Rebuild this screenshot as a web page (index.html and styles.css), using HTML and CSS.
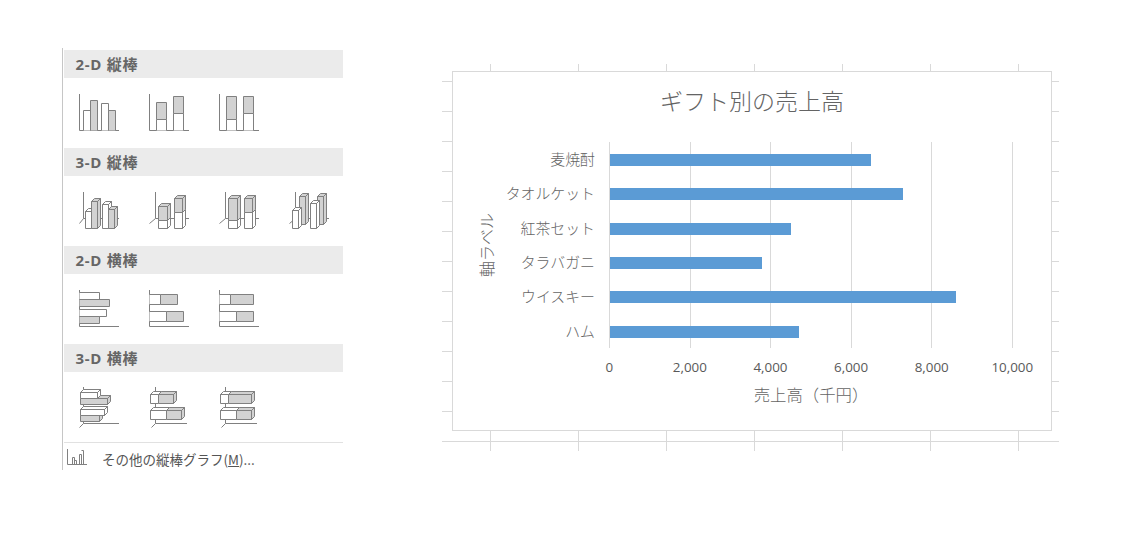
FILE: index.html
```html
<!DOCTYPE html>
<html lang="ja">
<head>
<meta charset="utf-8">
<title>縦棒グラフ</title>
<link rel="stylesheet" href="styles.css">
</head>
<body>
<div class="page">
  <aside class="panel">
    <section>
      <h2 class="head">2-D 縦棒</h2>
      <div class="icons">
        <svg class="ic" viewBox="0 0 40 45"><path d="M.5 1V37.5H40"/><path class="w" d="M4.5 37.5V17.5H11.5V37.5M22.5 37.5V10.5H29.5V37.5"/><path class="g" d="M11.5 37.5V7.5H18.5V37.5M29.5 37.5V17.5H36.5V37.5"/></svg>
        <svg class="ic" viewBox="0 0 40 45"><path d="M.5 1V37.5H40"/><path class="g" d="M7.5 9.5h10v17h-10zM24.5 3.5h10v17h-10z"/><path class="w" d="M7.5 37.5V26.5h10V37.5M24.5 37.5V20.5h10V37.5"/></svg>
        <svg class="ic" viewBox="0 0 40 45"><path d="M.5 1V37.5H40"/><path class="g" d="M7.5 3.5h10v23h-10zM24.5 3.5h10v17h-10z"/><path class="w" d="M7.5 37.5V26.5h10V37.5M24.5 37.5V20.5h10V37.5"/></svg>
      </div>
    </section>
    <section>
      <h2 class="head">3-D 縦棒</h2>
      <div class="icons">
        <svg class="ic" viewBox="0 0 40 45"><path d="M4.5 1V27.5M.5 32.5L4.5 27.5H40"/>
          <path class="w" d="M6.5 20.5h6v17h-6zM6.5 20.5l3-3h6l-3 3zM12.5 20.5l3-3v17l-3 3z"/>
          <path class="g" d="M12.5 10.5h6v27h-6zM12.5 10.5l3-3h6l-3 3zM18.5 10.5l3-3v27l-3 3z"/>
          <path class="w" d="M23.5 13.5h6v24h-6zM23.5 13.5l3-3h6l-3 3zM29.5 13.5l3-3v24l-3 3z"/>
          <path class="g" d="M29.5 18.5h6v19h-6zM29.5 18.5l3-3h6l-3 3zM35.5 18.5l3-3v19l-3 3z"/></svg>
        <svg class="ic" viewBox="0 0 40 45"><path d="M6.5 1V27.5M.5 32.5L6.5 27.5H40"/>
          <path class="w" d="M9.5 29.5h9v8h-9zM18.5 29.5l3-3v8l-3 3z"/>
          <path class="g" d="M9.5 15.5h9v14h-9zM9.5 15.5l3-3h9l-3 3zM18.5 15.5l3-3v14l-3 3z"/>
          <path class="w" d="M25.5 21.5h8v16h-8zM33.5 21.5l3-3v16l-3 3z"/>
          <path class="g" d="M25.5 7.5h8v14h-8zM25.5 7.5l3-3h8l-3 3zM33.5 7.5l3-3v14l-3 3z"/></svg>
        <svg class="ic" viewBox="0 0 40 45"><path d="M6.5 1V27.5M.5 32.5L6.5 27.5H40"/>
          <path class="w" d="M9.5 29.5h9v8h-9zM18.5 29.5l3-3v8l-3 3z"/>
          <path class="g" d="M9.5 7.5h9v22h-9zM9.5 7.5l3-3h9l-3 3zM18.5 7.5l3-3v22l-3 3z"/>
          <path class="w" d="M25.5 21.5h8v16h-8zM33.5 21.5l3-3v16l-3 3z"/>
          <path class="g" d="M25.5 7.5h8v14h-8zM25.5 7.5l3-3h8l-3 3zM33.5 7.5l3-3v14l-3 3z"/></svg>
        <svg class="ic" viewBox="0 0 40 45"><path d="M6.5 1V27.5M.5 32.5L6.5 27.5H40"/>
          <path class="g" d="M10.5 5.5h6v28h-6zM10.5 5.5l3-3h6l-3 3zM16.5 5.5l3-3v28l-3 3z"/>
          <path class="g" d="M28.5 5.5h6v28h-6zM28.5 5.5l3-3h6l-3 3zM34.5 5.5l3-3v28l-3 3z"/>
          <path class="w" d="M3.5 19.5h6v18h-6zM3.5 19.5l3-3h6l-3 3zM9.5 19.5l3-3v18l-3 3z"/>
          <path class="w" d="M21.5 12.5h6v25h-6zM21.5 12.5l3-3h6l-3 3zM27.5 12.5l3-3v25l-3 3z"/></svg>
      </div>
    </section>
    <section>
      <h2 class="head">2-D 横棒</h2>
      <div class="icons">
        <svg class="ic" viewBox="0 0 40 45"><path d="M.5 1V37.5H40"/><path class="w" d="M.5 3.5H20.5V10.5H.5M.5 20.5H27.5V27.5H.5"/><path class="g" d="M.5 10.5H30.5V17.5H.5M.5 27.5H20.5V34.5H.5"/></svg>
        <svg class="ic" viewBox="0 0 40 45"><path d="M.5 1V37.5H40"/><path class="w" d="M.5 5.5H11.5V15.5H.5M.5 22.5H17.5V32.5H.5"/><path class="g" d="M11.5 5.5H28.5V15.5H11.5zM17.5 22.5H34.5V32.5H17.5z"/></svg>
        <svg class="ic" viewBox="0 0 40 45"><path d="M.5 1V37.5H40"/><path class="w" d="M.5 5.5H11.5V15.5H.5M.5 22.5H17.5V32.5H.5"/><path class="g" d="M11.5 5.5H34.5V15.5H11.5zM17.5 22.5H34.5V32.5H17.5z"/></svg>
      </div>
    </section>
    <section>
      <h2 class="head">3-D 横棒</h2>
      <div class="icons">
        <svg class="ic" viewBox="0 0 40 45"><path d="M4.5 0V36.5M.5 40.5L4.5 36.5H40"/>
          <path class="g" d="M1.5 11.5h27v6h-27zM1.5 11.5l3-3h27l-3 3zM28.5 11.5l3-3v6l-3 3z"/>
          <path class="w" d="M1.5 5.5h17v6h-17zM1.5 5.5l3-3h17l-3 3zM18.5 5.5l3-3v6l-3 3z"/>
          <path class="g" d="M1.5 28.5h19v6h-19zM1.5 28.5l3-3h19l-3 3zM20.5 28.5l3-3v6l-3 3z"/>
          <path class="w" d="M1.5 22.5h24v6h-24zM1.5 22.5l3-3h24l-3 3zM25.5 22.5l3-3v6l-3 3z"/></svg>
        <svg class="ic" viewBox="0 0 40 45"><path d="M6.5 0V36.5M2.5 40.5L6.5 36.5H38"/>
          <path class="g" d="M9.5 7.5h15v9h-15zM9.5 7.5l3-3h15l-3 3zM24.5 7.5l3-3v9l-3 3z"/>
          <path class="w" d="M1.5 7.5h8v9h-8zM1.5 7.5l3-3h8l-3 3z"/>
          <path class="g" d="M17.5 23.5h15v9h-15zM17.5 23.5l3-3h15l-3 3zM32.5 23.5l3-3v9l-3 3z"/>
          <path class="w" d="M1.5 23.5h16v9h-16zM1.5 23.5l3-3h16l-3 3z"/></svg>
        <svg class="ic" viewBox="0 0 40 45"><path d="M6.5 0V36.5M2.5 40.5L6.5 36.5H38"/>
          <path class="g" d="M9.5 7.5h23v9h-23zM9.5 7.5l3-3h23l-3 3zM32.5 7.5l3-3v9l-3 3z"/>
          <path class="w" d="M1.5 7.5h8v9h-8zM1.5 7.5l3-3h8l-3 3z"/>
          <path class="g" d="M17.5 23.5h15v9h-15zM17.5 23.5l3-3h15l-3 3zM32.5 23.5l3-3v9l-3 3z"/>
          <path class="w" d="M1.5 23.5h16v9h-16zM1.5 23.5l3-3h16l-3 3z"/></svg>
      </div>
    </section>
    <div class="more">
      <svg class="more-ic" viewBox="0 0 20 17"><path d="M.5 0V15.5H20M5.5 15V8.5H7.5V15M7.5 11.5H9.5V15M12.5 15V5.5H14.5V15M14.5 1.5H16.5V15"/></svg>
      <span class="more-label">その他の縦棒グラフ(<u>M</u>)...</span>
    </div>
  </aside>

  <div class="sheet">
    <div class="chart">
      <div class="title">ギフト別の売上高</div>
      <div class="ytitle">軸ラベル</div>
      <div class="cats">
        <div>麦焼酎</div><div>タオルケット</div><div>紅茶セット</div><div>タラバガニ</div><div>ウイスキー</div><div>ハム</div>
      </div>
      <div class="plot">
        <div class="grid"><i></i><i></i><i></i><i></i><i></i></div>
        <div class="bars">
          <div class="row"><b style="width:261px"></b></div>
          <div class="row"><b style="width:293px"></b></div>
          <div class="row"><b style="width:181px"></b></div>
          <div class="row"><b style="width:152px"></b></div>
          <div class="row"><b style="width:346px"></b></div>
          <div class="row"><b style="width:189px"></b></div>
        </div>
      </div>
      <div class="ticks"><span>0</span><span>2,000</span><span>4,000</span><span>6,000</span><span>8,000</span><span>10,000</span></div>
      <div class="xtitle">売上高（千円）</div>
    </div>
  </div>
</div>
</body>
</html>
```
FILE: styles.css
```css
* { box-sizing: border-box; }
html, body { margin: 0; padding: 0; background: #fff; }
body { font-family: "Noto Sans CJK JP", "Open Sans", sans-serif; overflow: hidden; }

.page { display: flex; align-items: flex-start; padding: 48px 0 0 62px; height: 535px; }

.panel { width: 281px; height: 422px; border-left: 1px solid #c6c6c6; padding: 2px 0 0 1px; flex: none; }
.head {
  margin: 0; height: 28px; padding: 0 0 0 11.5px; background: #ebebeb;
  font: 700 15px/28px "Open Sans", "Noto Sans CJK JP", sans-serif; letter-spacing: .7px; color: #666;
}
.icons { display: flex; gap: 30px; height: 70px; padding: 15px 0 0 15px; }
.ic { display: block; width: 40px; height: 45px; flex: none; overflow: visible; }
.ic path, .more-ic path { fill: none; stroke: #808080; stroke-width: 1; }
.ic path.g { fill: #d2d2d2; }
.ic path.w { fill: #fff; }

.more {
  display: flex; align-items: flex-start; gap: 15px; height: 28px;
  border-top: 1px solid #e1e1e1; padding-left: 3px;
  font-size: 13.5px; color: #555;
}
.more-ic { display: block; width: 20px; height: 17px; flex: none; margin-top: 6px; }
.more-label { display: block; margin-top: 6px; line-height: 20px; white-space: nowrap; }

.sheet {
  position: relative; flex: none; margin: 16px 0 0 99px; width: 617px; height: 387px;
  background-image:
    repeating-linear-gradient(to right, #d9d9d9 0 1px, transparent 1px 88px),
    repeating-linear-gradient(to bottom, #d9d9d9 0 1px, transparent 1px 30px);
  background-position: 48px 0, 0 17px;
  background-size: 569px 387px, 617px 361px;
  background-repeat: no-repeat;
}
.chart {
  position: absolute; left: 10px; top: 7px; width: 600px; height: 360px;
  background: #fff; border: 1px solid #d9d9d9; color: #646464; font-weight: 300;
  display: grid;
  grid-template-columns: 47px 109px 404px 1fr;
  grid-template-rows: 70px 206px 38px 20px;
}
.title { grid-column: 1 / -1; font-size: 23px; line-height: 56px; text-align: center; }
.ytitle {
  grid-column: 1; grid-row: 2; justify-self: start; align-self: center; margin-left: 24px;
  writing-mode: vertical-rl; text-orientation: sideways; transform: rotate(180deg);
  font-size: 16px; line-height: 18px; width: 18px;
}
.cats {
  grid-column: 2; grid-row: 2; display: grid; grid-template-rows: repeat(6, 1fr);
  align-items: center; text-align: right; padding-right: 14px;
  font-size: 14.9px; line-height: 20px;
}
.plot { grid-column: 3; grid-row: 2; position: relative; }
.grid { position: absolute; inset: 0; display: flex; border-right: 1px solid #d9d9d9; }
.grid i { flex: 1; border-left: 1px solid #d9d9d9; }
.bars { height: 100%; margin-top: 1px; position: relative; display: grid; grid-template-rows: repeat(6, 1fr); align-items: center; padding-left: 1px; }
.row { display: flex; align-items: center; }
.row b { display: block; height: 12px; background: #5b9bd5; }
.ticks {
  grid-column: 3; grid-row: 3; display: flex; margin-left: -40px; width: 484px;
  font: 400 13.4px/38px "Open Sans", sans-serif; color: #595959;
}
.ticks span { width: 80.6px; flex: none; text-align: center; }
.xtitle { grid-column: 3; grid-row: 4; text-align: center; font-size: 16.4px; line-height: 17px; white-space: nowrap; }
```
